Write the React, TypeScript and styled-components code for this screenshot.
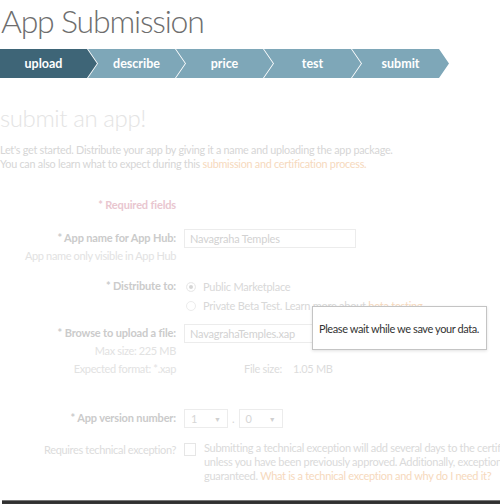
import React, { FC } from 'react';
import styled, { createGlobalStyle } from 'styled-components';

const GlobalStyle = createGlobalStyle`
  html, body {
    margin: 0;
    padding: 0;
    background: #fff;
  }
  body {
    font-family: Lato, "Open Sans", "Liberation Sans", sans-serif;
    width: 500px;
    height: 504px;
    overflow: hidden;
  }
`;

const Page = styled.div`
  position: relative;
  width: 500px;
  height: 504px;
  overflow: hidden;
`;

const Title = styled.h1`
  margin: 0;
  padding-left: 1px;
  font-size: 32px;
  font-weight: 300;
  line-height: 42px;
  letter-spacing: -1.2px;
  color: #6e6e6e;
`;

const Steps = styled.div`
  display: flex;
  margin-top: 7px;
  height: 29px;
`;

const Step = styled.div<{ $active?: boolean; $first?: boolean }>`
  width: 97px;
  height: 29px;
  margin-left: ${({ $first }) => ($first ? '0' : '-9px')};
  padding-left: ${({ $first }) => ($first ? '0' : '10px')};
  padding-right: 10px;
  box-sizing: border-box;
  display: flex;
  align-items: center;
  justify-content: center;
  background: ${({ $active }) => ($active ? '#3e6577' : '#7ea7b8')};
  color: #fff;
  font-size: 12.5px;
  font-weight: 700;
  clip-path: ${({ $first }) =>
    $first
      ? 'polygon(0 0, calc(100% - 10px) 0, 100% 50%, calc(100% - 10px) 100%, 0 100%)'
      : 'polygon(0 0, calc(100% - 10px) 0, 100% 50%, calc(100% - 10px) 100%, 0 100%, 10px 50%)'};
`;

const Heading = styled.h2`
  margin: 25px 0 0;
  font-size: 24px;
  font-weight: 300;
  line-height: 30px;
  letter-spacing: -0.4px;
  color: #e4e4e4;
`;

const Intro = styled.p`
  margin: 10px 0 0;
  font-size: 10.8px;
  line-height: 14px;
  letter-spacing: -0.25px;
  color: #d6d6d6;
  white-space: nowrap;
`;

const Link = styled.span`
  color: #f6d9bd;
`;

const Form = styled.div`
  display: flex;
  flex-direction: column;
`;

const Row = styled.div<{ $top: number }>`
  display: grid;
  grid-template-columns: 176px 1fr;
  column-gap: 8px;
  margin-top: ${({ $top }) => $top}px;
  align-items: start;
`;

const Label = styled.div<{ $bold?: boolean }>`
  text-align: right;
  font-size: 11px;
  line-height: 18px;
  font-weight: ${({ $bold }) => ($bold ? 700 : 400)};
  letter-spacing: ${({ $bold }) => ($bold ? '-0.15px' : '-0.35px')};
  color: ${({ $bold }) => ($bold ? '#cbcbcb' : '#dcdcdc')};
  white-space: nowrap;
`;

const Required = styled(Label)`
  color: #e9c6cf;
`;

const Hint = styled.div`
  text-align: right;
  font-size: 11px;
  line-height: 18px;
  letter-spacing: -0.35px;
  color: #e2e2e2;
  white-space: nowrap;
`;

const TextBox = styled.div<{ $w: number }>`
  width: ${({ $w }) => $w}px;
  height: 19px;
  box-sizing: border-box;
  border: 1px solid #ececec;
  padding-left: 5px;
  font-size: 11px;
  line-height: 17px;
  letter-spacing: -0.2px;
  color: #d2d2d2;
  white-space: nowrap;
  overflow: hidden;
`;

const Options = styled.div`
  display: flex;
  flex-direction: column;
`;

const Option = styled.div`
  display: flex;
  align-items: center;
  gap: 7px;
  height: 19px;
  font-size: 11px;
  letter-spacing: -0.25px;
  color: #d8d8d8;
  white-space: nowrap;
`;

const Radio = styled.span<{ $checked?: boolean }>`
  width: 10px;
  height: 10px;
  margin-left: 2px;
  border-radius: 50%;
  box-sizing: border-box;
  border: 1px solid #ececec;
  background: ${({ $checked }) => ($checked ? '#d6d6d6' : '#fff')};
  box-shadow: ${({ $checked }) => ($checked ? 'inset 0 0 0 2px #fff' : 'none')};
  flex: none;
`;

const FileInfo = styled.div`
  display: flex;
  gap: 11px;
  margin-top: 17px;
  padding-left: 60px;
  font-size: 11px;
  line-height: 18px;
  letter-spacing: -0.3px;
  color: #dcdcdc;
  white-space: nowrap;
`;

const Selects = styled.div`
  display: flex;
  align-items: center;
  gap: 4px;
  font-size: 11px;
  color: #d6d6d6;
`;

const Select = styled.div`
  width: 44px;
  height: 19px;
  box-sizing: border-box;
  border: 1px solid #ececec;
  display: flex;
  align-items: center;
  justify-content: space-between;
  padding: 0 6px;
  font-size: 11px;
  color: #d6d6d6;
`;

const Caret = styled.span`
  font-size: 7px;
  color: #d0d0d0;
`;

const CheckLine = styled.div`
  display: flex;
  gap: 8px;
`;

const Checkbox = styled.span`
  width: 12px;
  height: 13px;
  margin-top: 2px;
  box-sizing: border-box;
  border: 1px solid #e6e6e6;
  flex: none;
`;

const Note = styled.div`
  font-size: 11px;
  line-height: 14px;
  letter-spacing: -0.3px;
  color: #dadada;
  white-space: nowrap;
`;

const BottomRule = styled.div`
  position: absolute;
  left: 2px;
  right: 0;
  bottom: 0;
  height: 4px;
  background: linear-gradient(to bottom, #9a9a9a 0, #2a2a2a 40%, #3a3a3a 100%);
`;

const WaitDialog = styled.div`
  position: absolute;
  left: 312px;
  top: 306px;
  width: 175px;
  height: 44px;
  box-sizing: border-box;
  background: #fff;
  border: 1px solid #c4c4c4;
  box-shadow: 0 1px 3px rgba(0, 0, 0, 0.12);
  display: flex;
  align-items: center;
  padding-left: 6px;
  font-size: 11px;
  letter-spacing: -0.4px;
  color: #333;
  white-space: nowrap;
`;

const steps = ['upload', 'describe', 'price', 'test', 'submit'];

const App: FC = () => {
  return (
    <Page>
      <GlobalStyle />
      <Title>App Submission</Title>
      <Steps>
        {steps.map((s, i) => (
          <Step key={s} $first={i === 0} $active={i === 0}>
            {s}
          </Step>
        ))}
      </Steps>
      <Heading>submit an app!</Heading>
      <Intro>
        Let's get started. Distribute your app by giving it a name and uploading the app package.
        <br />
        You can also learn what to expect during this <Link>submission and certification process.</Link>
      </Intro>

      <Form>
        <Row $top={25}>
          <Required $bold>* Required fields</Required>
          <div />
        </Row>

        <Row $top={15}>
          <div>
            <Label $bold>* App name for App Hub:</Label>
            <Hint>App name only visible in App Hub</Hint>
          </div>
          <TextBox $w={172}>Navagraha Temples</TextBox>
        </Row>

        <Row $top={12}>
          <Label $bold>* Distribute to:</Label>
          <Options>
            <Option>
              <Radio $checked />
              <span>Public Marketplace</span>
            </Option>
            <Option>
              <Radio />
              <span>
                Private Beta Test. Learn more about <Link>beta testing</Link>
              </span>
            </Option>
          </Options>
        </Row>

        <Row $top={9}>
          <div>
            <Label $bold>* Browse to upload a file:</Label>
            <Hint>Max size: 225 MB</Hint>
            <Hint>Expected format: *.xap</Hint>
          </div>
          <div>
            <TextBox $w={140}>NavagrahaTemples.xap</TextBox>
            <FileInfo>
              <span>File size:</span>
              <span>1.05 MB</span>
            </FileInfo>
          </div>
        </Row>

        <Row $top={31}>
          <Label $bold>* App version number:</Label>
          <Selects>
            <Select>
              1 <Caret>▼</Caret>
            </Select>
            .
            <Select>
              0 <Caret>▼</Caret>
            </Select>
          </Selects>
        </Row>

        <Row $top={13}>
          <Label>Requires technical exception?</Label>
          <CheckLine>
            <Checkbox />
            <Note>
              Submitting a technical exception will add several days to the certifi
              <br />
              unless you have been previously approved. Additionally, exception
              <br />
              guaranteed. <Link>What is a technical exception and why do I need it?</Link>
            </Note>
          </CheckLine>
        </Row>
      </Form>

      <WaitDialog>Please wait while we save your data.</WaitDialog>
      <BottomRule />
    </Page>
  );
};

export default App;
